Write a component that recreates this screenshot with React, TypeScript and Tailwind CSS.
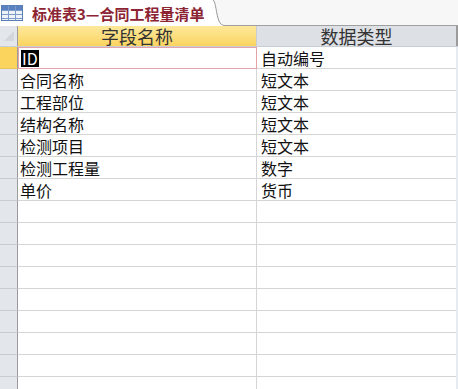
import React from "react";

const rows: [string, string][] = [
  ["ID", "自动编号"],
  ["合同名称", "短文本"],
  ["工程部位", "短文本"],
  ["结构名称", "短文本"],
  ["检测项目", "短文本"],
  ["检测工程量", "数字"],
  ["单价", "货币"],
];

function TableIcon() {
  return (
    <svg width="22" height="16" viewBox="0 0 22 16">
      <rect x="0.5" y="0.5" width="21" height="15" fill="#eef3fa" stroke="#5b7fb5" />
      <rect x="1" y="1" width="20" height="4" fill="#5a82c0" />
      {[5, 9, 13].map((y) => (
        <line key={y} x1="1" y1={y + 0.5} x2="21" y2={y + 0.5} stroke="#7d9ccc" />
      ))}
      {[7, 14].map((x) => (
        <line key={x} x1={x + 0.5} y1="1" x2={x + 0.5} y2="15" stroke="#7d9ccc" />
      ))}
    </svg>
  );
}

export default function App() {
  const empty = Array.from({ length: 9 });
  return (
    <div
      className="w-[458px] h-[389px] overflow-hidden bg-white text-[#111]"
      style={{ fontFamily: '"Noto Sans CJK SC", "Liberation Sans", sans-serif' }}
    >
      {/* tab strip */}
      <div className="flex h-[26px] bg-[#f7f7f7]">
        <div className="flex items-center gap-[9px] bg-white pl-[1px] pr-[8px] h-[26px]">
          <TableIcon />
          <span className="text-[15px] font-bold text-[#8c2433] leading-none">标准表3—合同工程量清单</span>
        </div>
        <svg width="12" height="26" viewBox="0 0 12 26" className="shrink-0">
          <path d="M0 0 L1 0 C4 2 4 14 7 21 C8 24 10 25 12 25 L12 26 L0 26 Z" fill="#ffffff" />
          <path d="M1 0 C4 2 4 14 7 21 C8 24 10 25 12 25.5" fill="none" stroke="#9a9a9a" />
        </svg>
        <div className="flex-1 border-b border-[#a0a0a0]" />
      </div>

      {/* header */}
      <div className="flex h-[21px] border-b border-[#c9ced6]">
        <div className="w-[18px] shrink-0 bg-[#e3e6ea] border-r border-[#9b9b9b] relative">
          <svg width="14" height="14" viewBox="0 0 14 14" className="absolute left-[2px] top-[3px]">
            <path d="M12 2 L12 12 L2 12 Z" fill="#d3d7dc" />
          </svg>
        </div>
        <div className="w-[239px] shrink-0 bg-gradient-to-b from-[#fde89a] to-[#fbd45e] border-r border-[#c9ced6] flex items-center justify-center text-[18px] text-[#333] leading-none">
          字段名称
        </div>
        <div className="w-[199px] shrink-0 bg-[#dde0e5] flex items-center justify-center text-[18px] text-[#333] leading-none">
          数据类型
        </div>
        <div className="w-[2px] bg-[#9b9b9b]" />
      </div>

      {/* rows */}
      {rows.map(([name, type], i) => (
        <div key={name} className="flex h-[22px]">
          <div
            className={`w-[18px] shrink-0 border-r border-[#9b9b9b] border-b ${
              i === 0 ? "bg-[#fbd45e] border-b-[#e8c35a]" : "bg-[#e3e6ea] border-b-[#c8ccd2]"
            }`}
          />
          <div
            className={`w-[239px] shrink-0 flex items-center pl-[2px] text-[16px] leading-none ${
              i === 0 ? "border border-[#e3a3a8]" : "border-b border-r border-[#d5d5d5]"
            }`}
          >
            {i === 0 ? <span className="bg-black text-white px-[1px] leading-[17px]">{name}</span> : name}
          </div>
          <div className="w-[199px] shrink-0 flex items-center pl-[4px] border-b border-[#d5d5d5] text-[16px] leading-none">
            {type}
          </div>
          <div className="w-[2px] bg-[#e6ebf2]" />
        </div>
      ))}
      {empty.map((_, i) => (
        <div key={i} className="flex h-[22px]">
          <div className="w-[18px] shrink-0 bg-[#e3e6ea] border-r border-[#9b9b9b] border-b border-b-[#c8ccd2]" />
          <div className="w-[239px] shrink-0 border-b border-r border-[#d5d5d5]" />
          <div className="w-[199px] shrink-0 border-b border-[#d5d5d5]" />
          <div className="w-[2px] bg-[#e6ebf2]" />
        </div>
      ))}
    </div>
  );
}
